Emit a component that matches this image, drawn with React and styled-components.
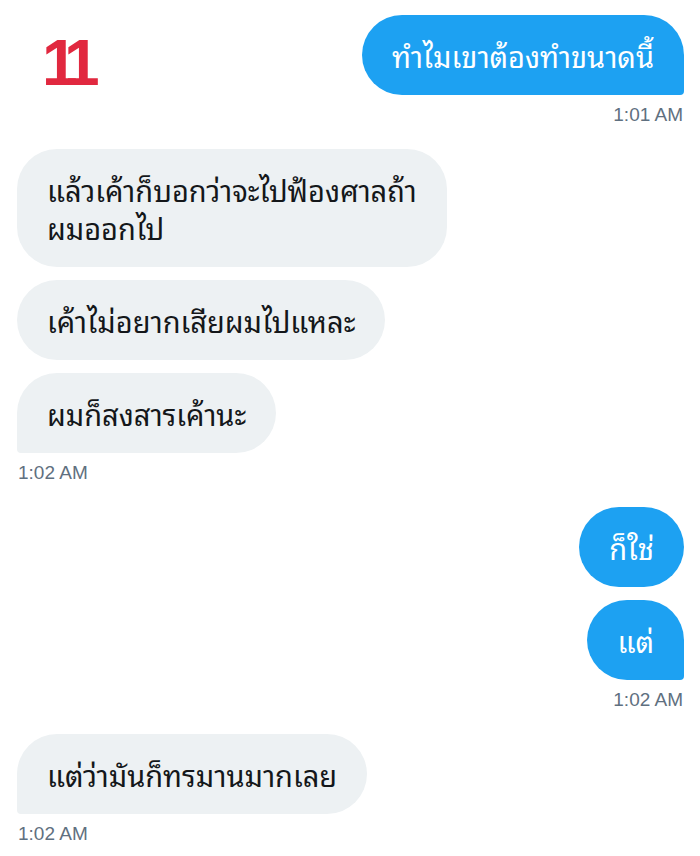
import React from "react";
import styled, { createGlobalStyle } from "styled-components";

const Global = createGlobalStyle`
  html, body { margin: 0; padding: 0; background: #ffffff; }
  body { width: 700px; height: 856px; overflow: hidden; }
`;

const Page = styled.div`
  position: relative;
  box-sizing: border-box;
  width: 700px;
  height: 856px;
  padding: 15px 16px 0 17px;
  display: flex;
  flex-direction: column;
  gap: 23px;
  font-family: "Noto Sans Thai Looped", "Noto Sans Thai", "Loma", "Garuda", "Noto Sans", "DejaVu Sans", sans-serif;
`;

const Logo = styled.div`
  position: absolute;
  left: 42px;
  top: 28px;
  font-family: "Liberation Sans", Arial, sans-serif;
  font-weight: 700;
  font-size: 64px;
  line-height: 70px;
  letter-spacing: -10px;
  color: #e1283f;
`;

const Group = styled.div`
  display: flex;
  flex-direction: column;
  align-items: ${(p) => (p.$mine ? "flex-end" : "flex-start")};
  gap: 13px;
`;

const Bubble = styled.div`
  box-sizing: border-box;
  padding: 21px 30px;
  font-size: 29px;
  line-height: 38px;
  white-space: pre-line;
  border-radius: 40px;
  background: ${(p) => (p.$mine ? "#1da1f2" : "#edf1f3")};
  color: ${(p) => (p.$mine ? "#ffffff" : "#14171a")};
  ${(p) => (p.$tail && p.$mine ? "border-bottom-right-radius: 4px;" : "")}
  ${(p) => (p.$tail && !p.$mine ? "border-bottom-left-radius: 4px;" : "")}
`;

const Time = styled.div`
  margin-top: -4px;
  font-family: "Liberation Sans", Arial, sans-serif;
  font-size: 19px;
  line-height: 22px;
  color: #5f7080;
  padding: 0 1px;
`;

const groups = [
  { mine: true, msgs: ["ทำไมเขาต้องทำขนาดนี้"], time: "1:01 AM" },
  {
    mine: false,
    msgs: [
      "แล้วเค้าก็บอกว่าจะไปฟ้องศาลถ้า\nผมออกไป",
      "เค้าไม่อยากเสียผมไปแหละ",
      "ผมก็สงสารเค้านะ",
    ],
    time: "1:02 AM",
  },
  { mine: true, msgs: ["ก็ใช่", "แต่"], time: "1:02 AM" },
  { mine: false, msgs: ["แต่ว่ามันก็ทรมานมากเลย"], time: "1:02 AM" },
];

export default function App() {
  return (
    <>
      <Global />
      <Page>
        <Logo>11</Logo>
        {groups.map((g, i) => (
          <Group key={i} $mine={g.mine}>
            {g.msgs.map((m, j) => (
              <Bubble key={j} $mine={g.mine} $tail={j === g.msgs.length - 1}>
                {m}
              </Bubble>
            ))}
            <Time>{g.time}</Time>
          </Group>
        ))}
      </Page>
    </>
  );
}
